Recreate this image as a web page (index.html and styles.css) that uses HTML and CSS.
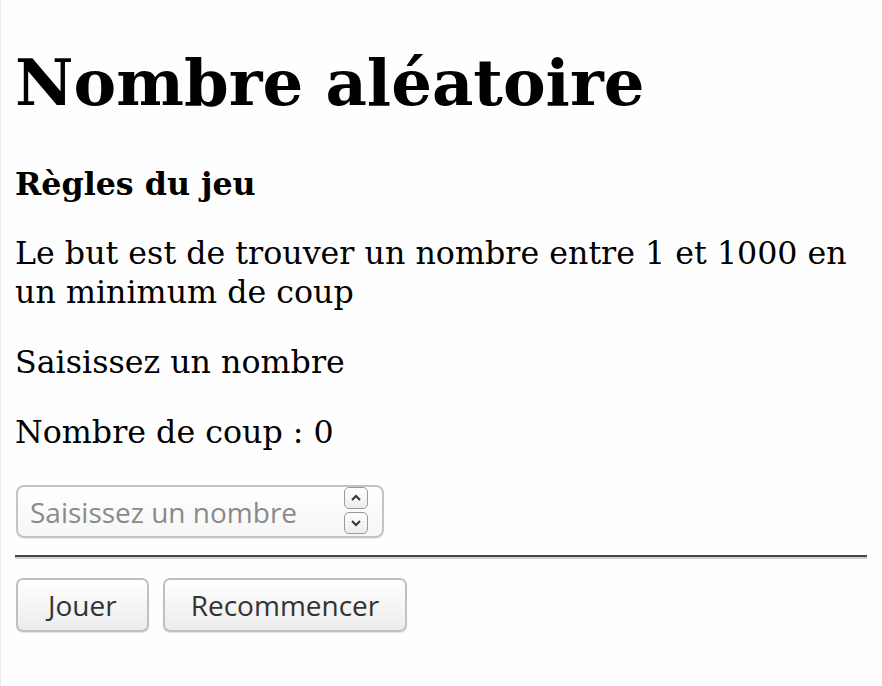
FILE: index.html
```html
<!DOCTYPE html>
<html lang="fr">
<head>
<meta charset="utf-8">
<title>Nombre aléatoire</title>
<link rel="stylesheet" href="styles.css">
</head>
<body>
<h1 class="title">Nombre aléatoire</h1>
<h4 class="rules">Règles du jeu</h4>
<p class="text">Le but est de trouver un nombre entre 1 et 1000 en un minimum de coup</p>
<p class="text">Saisissez un nombre</p>
<p class="text last">Nombre de coup : 0</p>
<div class="field">
  <input class="number" type="number" placeholder="Saisissez un nombre">
  <div class="spin">
    <span class="spin-btn"><svg viewBox="0 0 12 8" width="12" height="8"><path d="M2 6 L6 2 L10 6" fill="none" stroke="#333" stroke-width="2"/></svg></span>
    <span class="spin-btn"><svg viewBox="0 0 12 8" width="12" height="8"><path d="M2 2 L6 6 L10 2" fill="none" stroke="#333" stroke-width="2"/></svg></span>
  </div>
</div>
<hr class="sep">
<div class="actions">
  <button class="btn btn-play" type="button">Jouer</button>
  <button class="btn" type="button">Recommencer</button>
</div>
</body>
</html>
```
FILE: styles.css
```css
html {
  background: #fefefe;
}
body {
  margin: 0;
  padding: 0 15px 0 14px;
  border-left: 1px solid #ececec;
  min-height: 686px;
  box-sizing: border-box;
  font-family: "DejaVu Serif", serif;
  font-size: 31.7px;
  line-height: 39px;
  color: #000;
}
.title {
  font-size: 64px;
  line-height: 70px;
  font-weight: bold;
  margin: 48px 0 46px;
}
.rules {
  font-size: 31.7px;
  font-weight: bold;
  margin: 0 0 31px;
}
.text {
  margin: 0 0 31px;
}
.text.last {
  margin-bottom: 33px;
}
.field {
  position: relative;
  width: 368px;
  margin-left: 1px;
}
.number {
  display: block;
  width: 368px;
  height: 53px;
  box-sizing: border-box;
  padding: 0 50px 0 12px;
  border: 2px solid #c4c4c4;
  border-radius: 8px;
  background: linear-gradient(#ffffff, #f6f6f6);
  box-shadow: 0 1px 1px rgba(0, 0, 0, 0.08);
  font-family: "Open Sans", "Noto Sans", sans-serif;
  font-size: 28px;
  color: #333;
  outline: none;
  appearance: textfield;
  -moz-appearance: textfield;
}
.number::placeholder {
  color: #8a8a8a;
}
.number::-webkit-inner-spin-button,
.number::-webkit-outer-spin-button {
  -webkit-appearance: none;
  margin: 0;
}
.spin {
  position: absolute;
  top: 2px;
  right: 16px;
  display: flex;
  flex-direction: column;
  gap: 3px;
}
.spin-btn {
  display: flex;
  align-items: center;
  justify-content: center;
  width: 24px;
  height: 22px;
  box-sizing: border-box;
  border: 1.5px solid #999;
  border-radius: 5px;
  background: linear-gradient(#ffffff, #ededed);
}
.sep {
  margin: 17px 0 19px;
  height: 0;
  border: 0;
  border-top: 2px solid #454545;
  border-bottom: 2px solid #d0d0d0;
}
.actions {
  display: flex;
  gap: 14px;
  padding-left: 1px;
}
.btn {
  height: 54px;
  padding: 0 26px;
  border: 2px solid #c0c0c0;
  border-radius: 7px;
  background: linear-gradient(#ffffff, #ececec);
  box-shadow: 0 1px 1px rgba(0, 0, 0, 0.1);
  font-family: "Open Sans", "Noto Sans", sans-serif;
  font-size: 28px;
  color: #333;
}
.btn-play {
  padding: 0 30px;
}
```
